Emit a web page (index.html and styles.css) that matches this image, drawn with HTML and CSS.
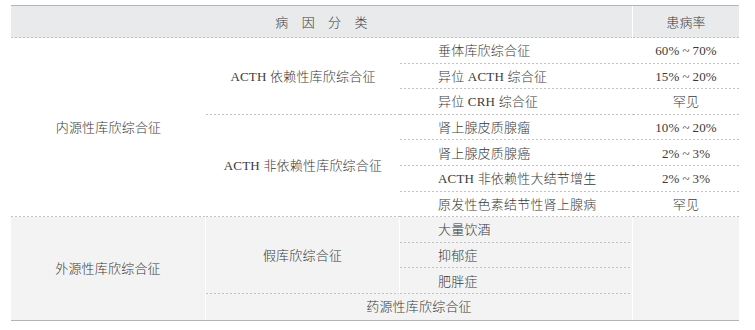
FILE: index.html
```html
<!DOCTYPE html>
<html lang="zh">
<head>
<meta charset="utf-8">
<title>库欣综合征病因分类</title>
<link rel="stylesheet" href="styles.css">
</head>
<body>
<div class="wrap">
<table class="tbl">
  <colgroup>
    <col class="c1"><col class="c2"><col class="c3"><col class="c4">
  </colgroup>
  <thead>
    <tr class="hd">
      <th colspan="3" class="sep">病　因　分　类</th>
      <th>患病率</th>
    </tr>
  </thead>
  <tbody>
    <tr>
      <td rowspan="7">内源性库欣综合征</td>
      <td rowspan="3">ACTH 依赖性库欣综合征</td>
      <td class="name">垂体库欣综合征</td>
      <td>60%&#8201;~&#8201;70%</td>
    </tr>
    <tr>
      <td class="name">异位 ACTH 综合征</td>
      <td>15%&#8201;~&#8201;20%</td>
    </tr>
    <tr>
      <td class="name">异位 CRH 综合征</td>
      <td>罕见</td>
    </tr>
    <tr>
      <td rowspan="4">ACTH 非依赖性库欣综合征</td>
      <td class="name">肾上腺皮质腺瘤</td>
      <td>10%&#8201;~&#8201;20%</td>
    </tr>
    <tr>
      <td class="name">肾上腺皮质腺癌</td>
      <td>2%&#8201;~&#8201;3%</td>
    </tr>
    <tr>
      <td class="name">ACTH 非依赖性大结节增生</td>
      <td>2%&#8201;~&#8201;3%</td>
    </tr>
    <tr>
      <td class="name">原发性色素结节性肾上腺病</td>
      <td>罕见</td>
    </tr>
  </tbody>
  <tbody class="ext">
    <tr>
      <td rowspan="4" class="sep nb">外源性库欣综合征</td>
      <td rowspan="3" class="sep">假库欣综合征</td>
      <td class="name sep">大量饮酒</td>
      <td rowspan="4" class="nb"></td>
    </tr>
    <tr>
      <td class="name sep">抑郁症</td>
    </tr>
    <tr>
      <td class="name sep">肥胖症</td>
    </tr>
    <tr>
      <td colspan="2" class="sep nb">药源性库欣综合征</td>
    </tr>
  </tbody>
</table>
</div>
</body>
</html>
```

FILE: styles.css
```css
html, body {
  margin: 0;
  padding: 0;
  background: #ffffff;
}

.wrap {
  padding: 5px 0 0 11px;
}

.tbl {
  width: 728px;
  table-layout: fixed;
  border-collapse: separate;
  border-spacing: 0;
  border-top: 1px solid #b4b4b4;
  border-bottom: 1px solid #b4b4b4;
  font-family: "Liberation Serif", "Noto Sans CJK SC", serif;
  font-size: 13px;
  font-weight: 300;
  letter-spacing: 0.2px;
  color: #3a3a3a;
}

.c1 { width: 195px; }
.c2 { width: 194px; }
.c3 { width: 233px; }
.c4 { width: 106px; }

.tbl th,
.tbl td {
  padding: 0;
  text-align: center;
  vertical-align: middle;
  line-height: 1;
  font-weight: 300;
  background-image: repeating-linear-gradient(to right, #c2c2c2 0 2px, transparent 2px 4px);
  background-repeat: no-repeat;
  background-position: left bottom;
  background-size: 100% 1px;
}

.tbl tr {
  height: 25.6px;
}

.tbl .hd {
  height: 32px;
}

.hd th {
  background-color: #e9eaec;
}

.tbl .name {
  text-align: left;
  padding-left: 38px;
}

.ext td {
  background-color: #f3f3f3;
}

.tbl .sep {
  border-right: 1px solid #ffffff;
}

.tbl .nb {
  background-image: none;
}
```
